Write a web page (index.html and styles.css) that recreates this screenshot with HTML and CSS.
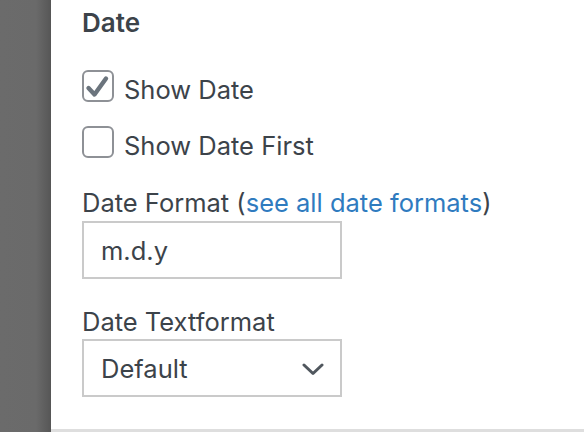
FILE: index.html
```html
<!DOCTYPE html>
<html>
<head>
<meta charset="utf-8">
<link rel="stylesheet" href="styles.css">
</head>
<body>
<div class="page">
  <div class="shade"></div>
  <div class="panel">
    <div class="section">
      <h2 class="heading">Date</h2>
      <div class="check-row">
        <span class="box checked">
          <svg width="28" height="28" viewBox="0 0 28 28"><path d="M4.5 16 L10.5 22.5 L22 6.5" fill="none" stroke="#6b747d" stroke-width="4.4" stroke-linecap="round" stroke-linejoin="round"/></svg>
        </span>
        <span class="check-label">Show Date</span>
      </div>
      <div class="check-row second">
        <span class="box"></span>
        <span class="check-label">Show Date First</span>
      </div>
      <div class="field-label first-label">Date Format (<a class="link">see all date formats</a>)</div>
      <div class="input">m.d.y</div>
      <div class="field-label">Date Textformat</div>
      <div class="input select">
        <span>Default</span>
        <svg width="22" height="13" viewBox="0 0 22 13"><path d="M2 2 L11 10.5 L20 2" fill="none" stroke="#50575e" stroke-width="3" stroke-linecap="round" stroke-linejoin="round"/></svg>
      </div>
    </div>
    <div class="next-section"></div>
  </div>
</div>
</body>
</html>
```
FILE: styles.css
```css
html, body {
  margin: 0;
  padding: 0;
  height: 100%;
  overflow: hidden;
}
body {
  font-family: Inter, "Noto Sans", sans-serif;
  color: #3c434a;
  background: #fff;
}
.page {
  display: flex;
  height: 432px;
}
.shade {
  width: 51px;
  flex: none;
  background: linear-gradient(to right, #6b6b6b 0, #6a6a6a 36px, #565656 51px);
}
.panel {
  flex: 1;
  display: flex;
  flex-direction: column;
}
.section {
  padding: 7px 0 0 31px;
  height: 429px;
  box-sizing: border-box;
}
.heading {
  margin: 0;
  font-size: 26px;
  font-weight: 600;
  line-height: 31px;
}
.check-row {
  display: flex;
  align-items: flex-start;
  margin-top: 32px;
  height: 32px;
}
.check-row.second {
  margin-top: 24px;
}
.box {
  width: 32px;
  height: 32px;
  box-sizing: border-box;
  border: 2px solid #8e9196;
  border-radius: 6px;
  flex: none;
  display: flex;
  align-items: center;
  justify-content: center;
  background: #fff;
}
.check-label {
  margin-left: 10px;
  margin-top: 4px;
  font-size: 25.5px;
  line-height: 32px;
}
.field-label {
  font-size: 25.5px;
  line-height: 32px;
  margin-top: 27px;
}
.field-label.first-label {
  margin-top: 29px;
}
.link {
  color: #2f7bbf;
}
.input {
  margin-top: 2px;
  width: 260px;
  height: 58px;
  box-sizing: border-box;
  border: 2px solid #cacaca;
  padding: 0 16px 0 17px;
  display: flex;
  align-items: center;
  font-size: 25.5px;
}
.select {
  margin-top: 1px;
  justify-content: space-between;
}
.select svg {
  margin-top: 2px;
}
.next-section {
  border-top: 3px solid #dedede;
  flex: 1;
}
```
